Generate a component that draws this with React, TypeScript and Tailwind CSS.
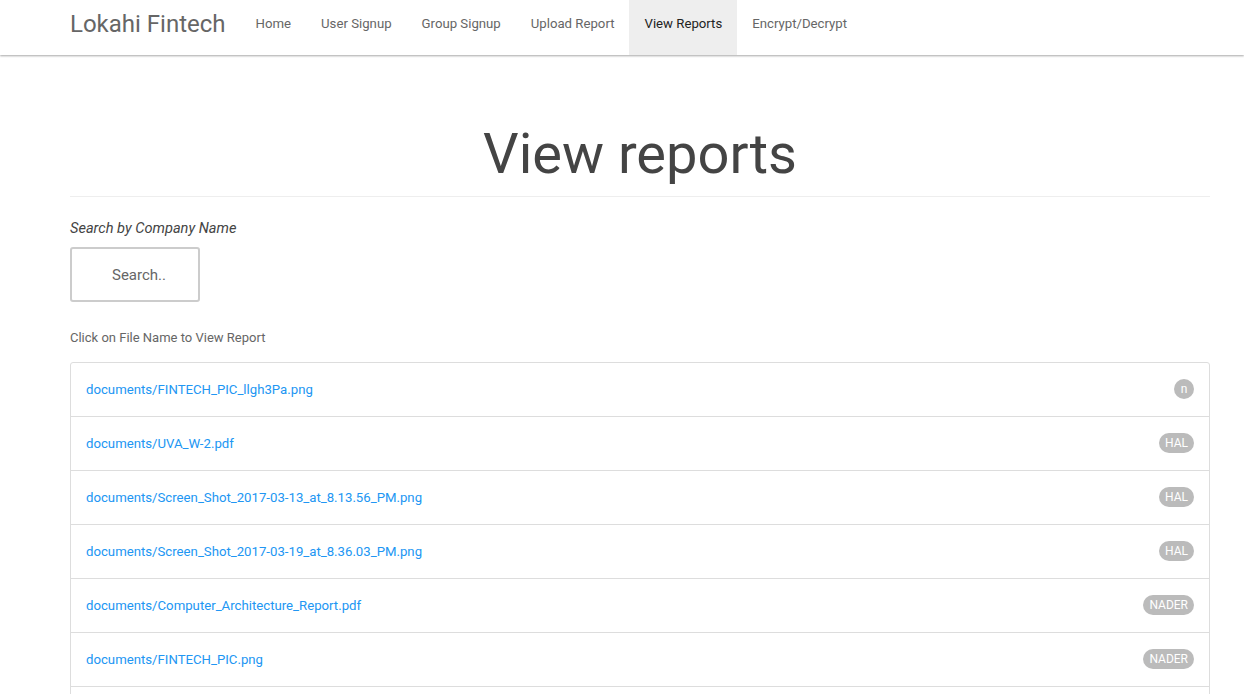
const navItems = ['Home', 'User Signup', 'Group Signup', 'Upload Report', 'View Reports', 'Encrypt/Decrypt'];

const reports = [
  { file: 'documents/FINTECH_PIC_llgh3Pa.png', owner: 'n' },
  { file: 'documents/UVA_W-2.pdf', owner: 'HAL' },
  { file: 'documents/Screen_Shot_2017-03-13_at_8.13.56_PM.png', owner: 'HAL' },
  { file: 'documents/Screen_Shot_2017-03-19_at_8.36.03_PM.png', owner: 'HAL' },
  { file: 'documents/Computer_Architecture_Report.pdf', owner: 'NADER' },
  { file: 'documents/FINTECH_PIC.png', owner: 'NADER' },
  { file: 'documents/Quarterly_Statement.pdf', owner: 'NADER' },
];

export default function App() {
  return (
    <div className="min-h-screen bg-white font-['Roboto',sans-serif] text-[#666]">
      {/* Navbar */}
      <nav className="h-[55px] bg-white shadow-[0_1px_2px_rgba(0,0,0,0.35)]">
        <div className="ml-[70px] flex h-full items-stretch">
          <a className="flex items-center pr-[15px] text-[24px] text-[#666] leading-none pb-[8px]">Lokahi Fintech</a>
          {navItems.map((item) => (
            <a
              key={item}
              className={
                item === 'View Reports'
                  ? 'flex items-center px-[15px] text-[13.2px] text-[#222] bg-[#eeeeee] pb-[8px]'
                  : 'flex items-center px-[15px] text-[13.2px] text-[#666] pb-[8px]'
              }
            >
              {item}
            </a>
          ))}
        </div>
      </nav>

      {/* Content */}
      <div className="ml-[70px] w-[1140px]">
        <div className="border-b border-[#eeeeee] pt-[69px] pb-[10px]">
          <h1 className="text-center text-[56px] leading-[1.1] text-[#444]">View reports</h1>
        </div>

        <p className="mt-[21px] text-[14.6px] italic text-[#444]">Search by Company Name</p>
        <div className="mt-[8px] flex h-[55px] w-[130px] items-center rounded-[3px] border-2 border-[#ccc] pl-[40px] text-[15px] text-[#666]">
          Search..
        </div>

        <p className="mt-[26px] text-[13px] text-[#666]">Click on File Name to View Report</p>

        <ul className="mt-[14px] rounded-[3px] border border-[#ddd]">
          {reports.map((r, i) => (
            <li
              key={i}
              className={
                i === 0
                  ? 'flex h-[53px] items-center justify-between px-[15px]'
                  : 'flex h-[54px] items-center justify-between border-t border-[#ddd] px-[15px]'
              }
            >
              <a className="text-[13.2px] text-[#2196f3]">{r.file}</a>
              <span className="flex h-[20px] min-w-[20px] items-center justify-center rounded-full bg-[#bbb] px-[6px] text-[12px] text-white">
                {r.owner}
              </span>
            </li>
          ))}
        </ul>
      </div>
    </div>
  );
}
